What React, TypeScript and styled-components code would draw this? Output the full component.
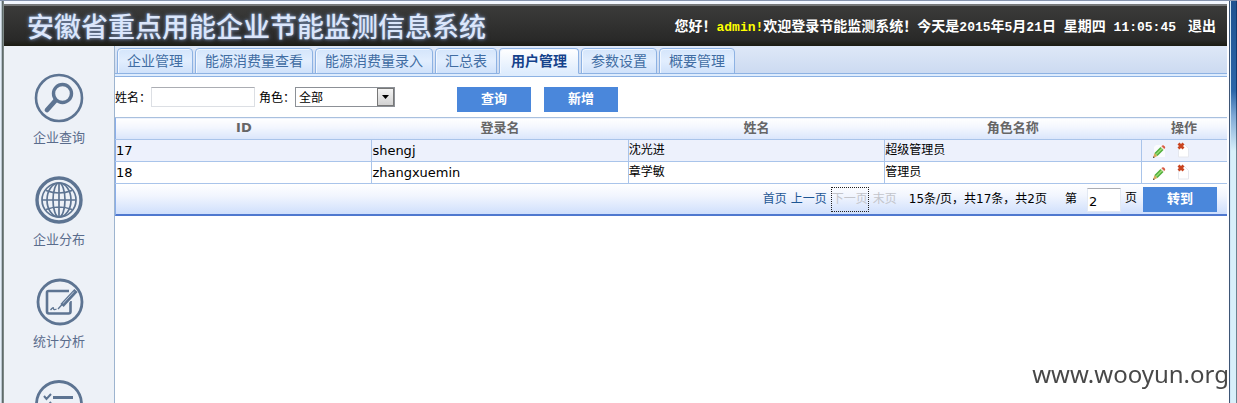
import React from "react";
import styled, { createGlobalStyle, css } from "styled-components";

const cjk = `"Noto Sans CJK SC", sans-serif`;

const GlobalStyle = createGlobalStyle`
  *, *::before, *::after { box-sizing: border-box; }
  body { margin: 0; background: #fff; font: 12px/16px "DejaVu Sans", ${cjk}; color: #000; }
  button, input, select { font: inherit; color: inherit; margin: 0; }
`;

const Frame = styled.div`
  display: flex;
  height: 100vh;
  overflow: hidden;
  border-top: 1px solid #8593ad;
`;

const LeftEdge = styled.div`
  flex: none;
  width: 4px;
  background: linear-gradient(90deg, #e4eef8 0 1px, #b9c4cc 1px 2px, #5f6b6b 2px 3px, #7d8886 3px 4px);
`;

const RightEdge = styled.div`
  flex: none;
  width: 10px;
  display: grid;
  grid-template-columns: 2px 1px 1px 1fr 1px;
`;

const EdgeStrip = styled.div<{ $fill: string }>`
  background: ${(p) => p.$fill};
`;

const Page = styled.div`
  flex: 1;
  min-width: 0;
  display: flex;
  flex-direction: column;
  padding-top: 3px;
  background: #f3f7ff;
`;

const Header = styled.header`
  flex: none;
  display: flex;
  align-items: center;
  justify-content: space-between;
  height: 42px;
  padding: 0 11px 0 23px;
  border-top: 2px solid #77797a;
  background: linear-gradient(#3b3b3a, #292928 85%, #1b1b12);
  white-space: nowrap;
`;

const Title = styled.h1`
  margin: 0;
  font: 500 27px/36px ${cjk};
  color: #dbe6fb;
  text-shadow: 0 0 3px #7d93b8, 0 0 5px #54627c;
`;

const Greeting = styled.div`
  font: bold 14px/20px ${cjk};
  color: #fff;
  white-space: pre;
`;

const Latin = styled.span<{ $accent?: boolean }>`
  font-family: "Liberation Mono", monospace;
  font-size: 13px;
  color: ${(p) => (p.$accent ? "#ff0" : "inherit")};
`;

const LogoutLink = styled.a`
  margin-left: 12px;
  color: inherit;
  text-decoration: none;
`;

const Body = styled.div`
  flex: 1;
  min-height: 0;
  display: flex;
`;

const Sidebar = styled.nav`
  flex: none;
  display: flex;
  flex-direction: column;
  align-items: center;
  gap: 28px;
  width: 111px;
  padding-top: 27px;
  overflow: hidden;
  background: #edf1f7;
  border-right: 1px solid #9db4cf;
`;

const SideLink = styled.a`
  flex: none;
  display: flex;
  flex-direction: column;
  align-items: center;
  gap: 4px;
  font: 13px/20px ${cjk};
  color: #5a6c8c;
  text-decoration: none;

  svg {
    display: block;
    width: 50px;
    height: 50px;
  }
`;

const Main = styled.main`
  flex: 1;
  min-width: 0;
  background: #fff;
`;

const TabBar = styled.div`
  display: flex;
  align-items: flex-end;
  gap: 2px;
  height: 31px;
  padding: 0 2px 3px;
  background: linear-gradient(#dee8f7, #ccdaf1 27px, #8db2e3 27px 28px, #deecfd 28px 30px, #8db2e3 30px);
`;

const Tab = styled.button<{ $active?: boolean }>`
  height: 26px;
  padding: 0 9px 3px;
  border: 1px solid #8db2e3;
  border-radius: 4px 4px 0 0;
  background: linear-gradient(#d4e5fb, #e2eefe 50%, #cfe1fa);
  box-shadow: inset 1px 1px 0 #f1f7ff;
  font: 14px/20px ${cjk};
  color: #416da3;
  white-space: nowrap;

  ${(p) =>
    p.$active &&
    css`
      padding: 0 11px 3px;
      border-bottom-color: #deecfd;
      background: linear-gradient(#fff, #deecfd);
      font-weight: bold;
      color: #15428b;
    `}
`;

const SearchForm = styled.form`
  display: flex;
  align-items: flex-start;
  height: 40px;
  padding-top: 10px;
`;

const Field = styled.label`
  display: flex;
  align-items: center;
  height: 20px;
  margin-right: 4px;
  font: 12px/20px ${cjk};
  white-space: nowrap;
`;

const NameInput = styled.input`
  width: 104px;
  height: 20px;
  padding: 0 3px;
  border: 1px solid #dcdfe4;
  border-top-color: #abadb3;
  background: #fff;
`;

const SelectBox = styled.span`
  position: relative;
  display: block;
  width: 100px;
`;

const RoleSelect = styled.select`
  appearance: none;
  display: block;
  width: 100%;
  height: 20px;
  padding: 0 20px 0 3px;
  border: 1px solid #8c9096;
  border-radius: 0;
  background: #fff;
  line-height: 16px;
`;

const SelectArrow = styled.span`
  position: absolute;
  top: 1px;
  right: 1px;
  display: grid;
  place-items: center;
  width: 17px;
  height: 18px;
  border: 1px solid #777;
  background: linear-gradient(#f4f4f4, #d2d2d2);
  pointer-events: none;
`;

const BlueButton = styled.button`
  flex: none;
  width: 74px;
  height: 25px;
  padding: 0 0 3px;
  border: 0;
  background: #4a87db;
  font: bold 13px/20px ${cjk};
  color: #fff;
`;

const SearchActions = styled.div`
  display: flex;
  gap: 13px;
  margin-left: 58px;
`;

const Grid = styled.table`
  width: 100%;
  table-layout: fixed;
  border-collapse: collapse;
  border-top: 1px solid #a9c0de;
  border-left: 1px solid #8aaeea;
`;

const HeadCell = styled.th<{ $narrow?: boolean }>`
  width: ${(p) => (p.$narrow ? "86px" : "auto")};
  height: 22px;
  padding: 0 0 2px;
  background: linear-gradient(#fff, #f4f7fe 40%, #d9e5fb);
  font: bold 13px/18px "DejaVu Sans", ${cjk};
  color: #666;
`;

const Row = styled.tr`
  background: #fff;

  &:nth-child(odd) {
    background: #edf1fc;
  }
`;

const Cell = styled.td<{ $cjk?: boolean }>`
  height: 22px;
  padding: ${(p) => (p.$cjk ? "0 0 2px" : "0")};
  border: 1px solid #a9c4ea;
  border-left-width: 0;
  font-size: ${(p) => (p.$cjk ? "12px" : "13px")};
  line-height: 18px;

  &:last-child {
    border-right: 0;
  }
`;

const RowActions = styled.div`
  display: flex;
  gap: 8px;
  height: 20px;
  padding-left: 9px;
`;

const IconButton = styled.button`
  width: 16px;
  height: 20px;
  padding: 0;
  border: 0;
  background: none;

  svg {
    display: block;
  }
`;

const Pager = styled.div`
  display: flex;
  align-items: flex-start;
  justify-content: flex-end;
  height: 32px;
  padding: 3px 10px 0 0;
  border-left: 1px solid #8aaeea;
  border-bottom: 2px solid #4f78cf;
  background: linear-gradient(#fff, #f1f5fe 40%, #cfdffc);
  line-height: 22px;
  white-space: nowrap;
`;

const PageLink = styled.a<{ $disabled?: boolean; $focused?: boolean }>`
  height: 25px;
  margin-right: 4px;
  padding: ${(p) => (p.$focused ? "0" : "1px 0")};
  border: ${(p) => (p.$focused ? "1px dotted #222" : "0")};
  color: ${(p) => (p.$disabled ? "#c3c5cb" : "#1d5694")};
  text-decoration: none;
`;

const PageInfo = styled.span`
  margin: 0 18px 0 8px;
  padding-top: 1px;
`;

const PageField = styled.label`
  display: flex;
  gap: 10px;
  padding-top: 1px;
`;

const PageInput = styled.input`
  width: 34px;
  height: 24px;
  padding: 2px 1px 0;
  border: 1px solid #e3e9f3;
  border-top-color: #abadb3;
  background: #fff;
  font-size: 13px;
`;

const PageUnit = styled.span`
  padding: 0 6px 0 4px;
`;

const Watermark = styled.div`
  position: fixed;
  right: 8px;
  bottom: 13px;
  font: 24px/32px "Noto Sans", sans-serif;
  color: #484848;
`;

const ring = { fill: "none", stroke: "#5d7492", strokeWidth: 3 };

const SearchIcon = () => (
  <svg viewBox="0 0 50 50" {...ring}>
    <circle cx="25" cy="25" r="23" strokeWidth="2.6" />
    <circle cx="28.500" cy="20.500" r="9" strokeWidth="3.400" />
    <path d="M21.500 27.500l-8.500 9.500" strokeWidth="4.800" strokeLinecap="round" />
  </svg>
);

const GlobeIcon = () => (
  <svg viewBox="0 0 50 50" {...ring}>
    <circle cx="25" cy="25" r="22" strokeWidth="3.400" />
    <g strokeWidth="1.700">
      <circle cx="25" cy="25" r="17" />
      <ellipse cx="25" cy="25" rx="6" ry="17" />
      <ellipse cx="25" cy="25" rx="12" ry="17" />
      <path d="M25 8v34M8 25h34M12 15.500q13 5 26 0M12 34.500q13-5 26 0" />
    </g>
  </svg>
);

const EditIcon = () => (
  <svg viewBox="0 0 50 50" {...ring}>
    <circle cx="26" cy="25" r="22" strokeWidth="2.800" />
    <path d="M35 14H14.500q-1.500 0-1.500 1.500v19q0 2 2 2h19.500q2 0 2-2V24" strokeWidth="2.600" />
    <path d="M40.500 14.500L27 29.500l-2.500 2" stroke="#edf1f7" strokeWidth="7" />
    <path d="M42 13.500L28 28.500" strokeWidth="4.500" />
    <path d="M40 14.500L28.500 27" stroke="#b9c6d8" strokeWidth="1" />
    <path d="M29 26.500l-5 5.500M16.500 33q3-3.500 3-1.500t3 .5" strokeWidth="1.300" />
  </svg>
);

const ListIcon = () => (
  <svg viewBox="0 0 50 50" {...ring}>
    <circle cx="25" cy="25" r="22.500" strokeWidth="2.800" />
    <path d="M19 18.500h20M19 26.500h20M19 34.500h20" />
    <path d="M10 17l2.500 3 4.500-5M10 25l2.500 3 4.500-5M10 33l2.500 3 4.500-5" strokeWidth="2" />
  </svg>
);

const PencilIcon = () => (
  <svg width="16" height="20" viewBox="0 0 16 20">
    <path d="M5 4h9v12H3V6z" fill="#fff" fillOpacity=".75" />
    <path d="M2 17l1.500-5 3 3z" fill="#d9a85a" />
    <path d="M3.500 12L9.500 6l3 3-6 6z" fill="#4fae3c" />
    <path d="M4.500 13L10.500 7l1 1-6 6z" fill="#9bdc74" />
    <path d="M9.500 6l1-1 3 3-1 1z" fill="#e9ddd0" />
    <path d="M10.500 5q1.500-1.500 3 0t0 3z" fill="#d8573f" />
    <path d="M2 17l.5-1.800 1.200 1.200z" fill="#333" />
  </svg>
);

const DeleteIcon = () => (
  <svg width="16" height="20" viewBox="0 0 16 20">
    <path d="M3.500 3.500h6l4 4v8.500h-10z" fill="#fff" stroke="#e6e8ee" />
    <path d="M3.500 2.500l5 5M8.500 2.500l-5 5" stroke="#c9441f" strokeWidth="2.800" />
  </svg>
);

const sideItems = [
  { label: "企业查询", Icon: SearchIcon },
  { label: "企业分布", Icon: GlobeIcon },
  { label: "统计分析", Icon: EditIcon },
  { label: "", Icon: ListIcon },
];

const tabs = ["企业管理", "能源消费量查看", "能源消费量录入", "汇总表", "用户管理", "参数设置", "概要管理"];

const users = [
  { id: 17, login: "shengj", name: "沈光进", role: "超级管理员" },
  { id: 18, login: "zhangxuemin", name: "章学敏", role: "管理员" },
];

export default function App() {
  return (
    <Frame>
      <GlobalStyle />
      <LeftEdge />
      <Page>
        <Header>
          <Title>安徽省重点用能企业节能监测信息系统</Title>
          <Greeting>
            您好！<Latin $accent>admin!</Latin>欢迎登录节能监测系统！今天是<Latin>2015</Latin>年<Latin>5</Latin>月
            <Latin>21</Latin>日<Latin> </Latin>星期四<Latin> 11:05:45</Latin>
            <LogoutLink href="#logout">退出</LogoutLink>
          </Greeting>
        </Header>
        <Body>
          <Sidebar>
            {sideItems.map(({ label, Icon }, i) => (
              <SideLink key={i} href="#">
                <Icon />
                {label}
              </SideLink>
            ))}
          </Sidebar>
          <Main>
            <TabBar role="tablist">
              {tabs.map((tab) => (
                <Tab key={tab} type="button" role="tab" aria-selected={tab === "用户管理"} $active={tab === "用户管理"}>
                  {tab}
                </Tab>
              ))}
            </TabBar>
            <SearchForm onSubmit={(e) => e.preventDefault()}>
              <Field>
                姓名：
                <NameInput type="text" />
              </Field>
              <Field>
                角色：
                <SelectBox>
                  <RoleSelect defaultValue="全部">
                    <option>全部</option>
                    <option>超级管理员</option>
                    <option>管理员</option>
                  </RoleSelect>
                  <SelectArrow>
                    <svg width="7" height="4" viewBox="0 0 7 4">
                      <path d="M0 0h7L3.500 4z" />
                    </svg>
                  </SelectArrow>
                </SelectBox>
              </Field>
              <SearchActions>
                <BlueButton type="submit">查询</BlueButton>
                <BlueButton type="button">新增</BlueButton>
              </SearchActions>
            </SearchForm>
            <Grid>
              <thead>
                <tr>
                  <HeadCell>ID</HeadCell>
                  <HeadCell>登录名</HeadCell>
                  <HeadCell>姓名</HeadCell>
                  <HeadCell>角色名称</HeadCell>
                  <HeadCell $narrow>操作</HeadCell>
                </tr>
              </thead>
              <tbody>
                {users.map((u) => (
                  <Row key={u.id}>
                    <Cell>{u.id}</Cell>
                    <Cell>{u.login}</Cell>
                    <Cell $cjk>{u.name}</Cell>
                    <Cell $cjk>{u.role}</Cell>
                    <Cell>
                      <RowActions>
                        <IconButton type="button" aria-label="编辑">
                          <PencilIcon />
                        </IconButton>
                        <IconButton type="button" aria-label="删除">
                          <DeleteIcon />
                        </IconButton>
                      </RowActions>
                    </Cell>
                  </Row>
                ))}
              </tbody>
            </Grid>
            <Pager>
              <PageLink href="#first">首页</PageLink>
              <PageLink href="#prev">上一页</PageLink>
              <PageLink href="#next" $disabled $focused>
                下一页
              </PageLink>
              <PageLink href="#last" $disabled>
                末页
              </PageLink>
              <PageInfo>15条/页，共17条，共2页</PageInfo>
              <PageField>
                第
                <PageInput type="text" defaultValue="2" />
              </PageField>
              <PageUnit>页</PageUnit>
              <BlueButton type="button">转到</BlueButton>
            </Pager>
          </Main>
        </Body>
      </Page>
      <RightEdge>
        <EdgeStrip $fill="#fdfdff" />
        <EdgeStrip $fill="#3d5575" />
        <EdgeStrip $fill="#cfe6f5" />
        <EdgeStrip $fill="linear-gradient(#1f5290, #2c66a8 90px, #7fa9d6 115px, #d8f0fa 150px)" />
        <EdgeStrip $fill="linear-gradient(#123a70 90px, #6a8390 150px)" />
      </RightEdge>
      <Watermark>www.wooyun.org</Watermark>
    </Frame>
  );
}
